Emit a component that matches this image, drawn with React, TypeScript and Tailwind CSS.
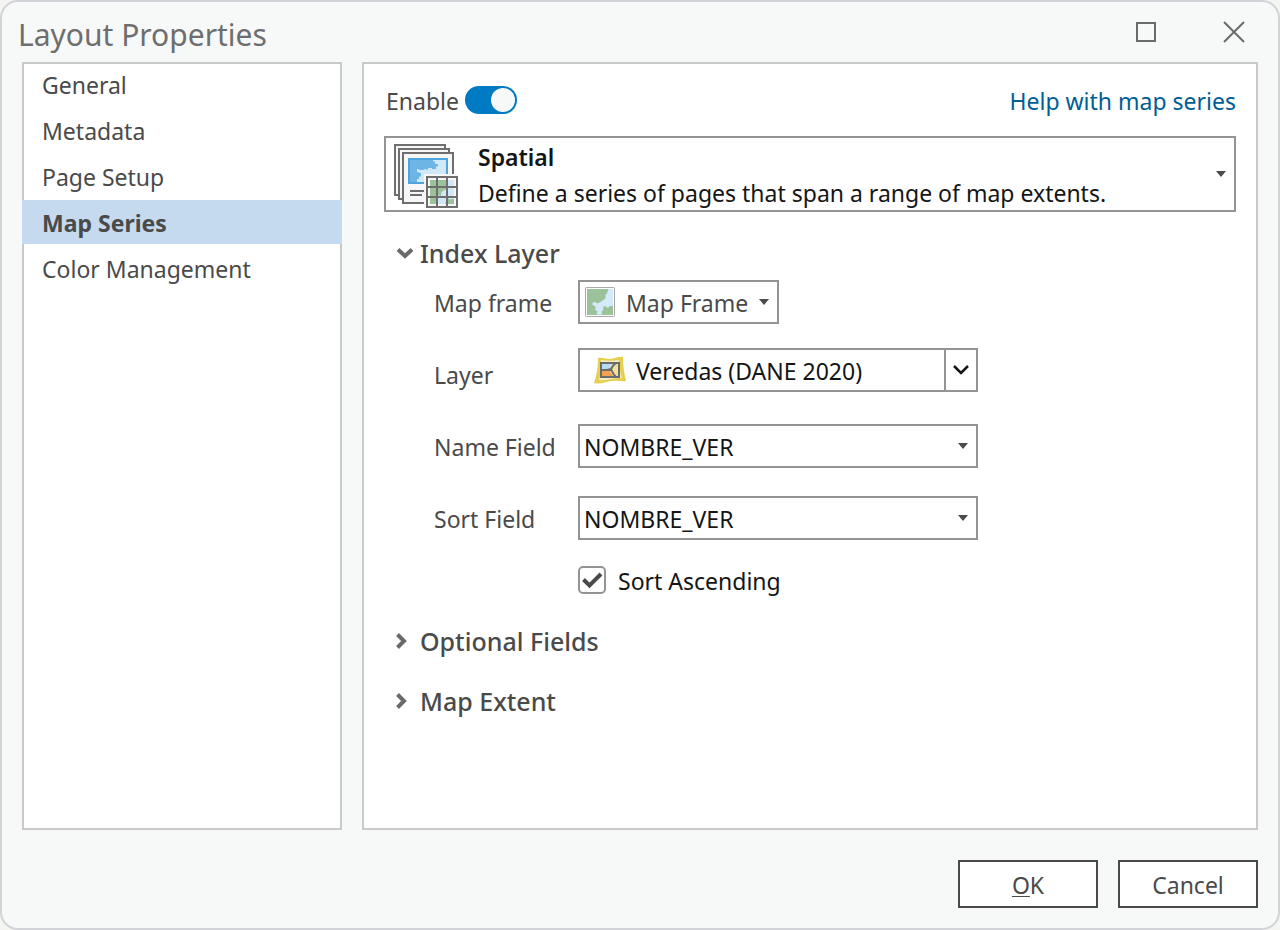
import { useState } from "react";
import type { ReactNode } from "react";

const pages = ["General", "Metadata", "Page Setup", "Map Series", "Color Management"];

function Caret({ className = "" }: { className?: string }) {
  return (
    <svg viewBox="0 0 10 6" className={`pointer-events-none h-[6px] w-[10px] shrink-0 fill-[#4a4a4a] ${className}`} aria-hidden="true">
      <path d="M0 0h10L5 6z" />
    </svg>
  );
}

function SpatialIcon() {
  return (
    <svg viewBox="8 6 64 64" className="mt-1 h-16 w-16 shrink-0" aria-hidden="true">
      <g fill="#f7f7f7" stroke="#6e6e6e" strokeWidth="2">
        <rect x="9" y="7" width="50" height="50" />
        <rect x="13" y="11" width="50" height="50" />
        <rect x="17" y="15" width="50" height="50" />
      </g>
      <rect x="23" y="21" width="38" height="24" fill="#d0e8f8" />
      <path d="M23 21h24v2l2 1v2h3v2l-2 1v2h-4v-1h-4v2l-3-1-2 1h-3l-2-1h-1v3l4 1v3l-2 1v2h-2v4H23z" fill="#6cb5e4" />
      <rect x="23" y="21" width="38" height="24" fill="none" stroke="#4ea4dc" strokeWidth="2" />
      <path d="M24 52h14v2H24zM24 56h12v2H24z" fill="#6e6e6e" />
      <rect x="38" y="36" width="34" height="34" fill="#f7f7f7" />
      <rect x="44" y="42" width="24" height="24" fill="#9cc29c" />
      <path d="M62 42h6v19h-3l-1 1-2-2-2 1v3l-1 2h-7v-3l-2-1v-3l2-2 3 1v-3l2-2 2-1 3-3z" fill="#d0e8f8" />
      <g fill="none" stroke="#6e6e6e" strokeWidth="2">
        <rect x="41" y="39" width="30" height="30" />
        <path d="M51 39v30M61 39v30M41 49h30M41 59h30" />
      </g>
    </svg>
  );
}

function MapIcon({ className = "" }: { className?: string }) {
  return (
    <svg viewBox="0 0 30 30" className={`pointer-events-none h-[30px] w-[30px] ${className}`} aria-hidden="true">
      <rect x="0.5" y="0.5" width="29" height="29" rx="1" fill="#fff" stroke="#a8a8a8" />
      <rect x="2" y="2" width="26" height="26" fill="#9cc29c" />
      <path d="M23.500 2H28v17h-3.500l-1.500 2-3-2-1.500 .5-.5 4-1.500 1 .5 3h-5.500l1-3.500-2.300-.5 .3-4-3-1.500v-2.500l3-.5 1.500 1.500 3-1 2.500-2 3-2V7.500l1.500-1z" fill="#d4e9f9" />
    </svg>
  );
}

function LayerIcon({ className = "" }: { className?: string }) {
  return (
    <svg viewBox="0 0 32 28" className={`pointer-events-none h-7 w-8 ${className}`} aria-hidden="true">
      <path d="M4 2c4-1 8 1 12 1 5 0 8-3 13-2 0 8 1 16 3 24-5 1-9-1-14 0-6 0-11 4-18 2C3 19 4 10 4 2z" fill="#e6cf4e" />
      <path d="M7 4c6 1 12 1 18 0 0 6 1 12 3 18-8 0-15 3-23 2 2-6 2-13 2-20z" fill="#f1ebc6" />
      <rect x="7" y="7" width="18" height="14" fill="#f3e39a" />
      <path d="M8 8h10l-3 5-7 1z" fill="#b8dcf4" />
      <path d="M8 14h7l4 6H8z" fill="#f3a253" />
      <path d="M7 7h18v14H7zM7 14h6l4-1c1-2 2-4 5-6M17 13c1 3 3 6 5 8" fill="none" stroke="#6b6b6b" strokeWidth="2" />
    </svg>
  );
}

function SelectBox({ id, options, className, icon, caret }: { id: string; options: string[]; className: string; icon?: ReactNode; caret?: ReactNode }) {
  return (
    <div className="grid items-center">
      <select id={id} className={`h-11 appearance-none border-2 border-[#949494] bg-white pt-[2px] [grid-area:1/1] ${className}`}>
        {options.map((o) => (
          <option key={o}>{o}</option>
        ))}
      </select>
      {icon}
      {caret ?? <Caret className="mr-[10px] justify-self-end [grid-area:1/1]" />}
    </div>
  );
}

function Row({ id, label, children, className = "items-center" }: { id: string; label: string; children: ReactNode; className?: string }) {
  return (
    <div className={`flex pl-[50px] ${className}`}>
      <label htmlFor={id} className="w-36 shrink-0 self-center pt-[2px]">{label}</label>
      {children}
    </div>
  );
}

function SectionHeader({ title, open, onClick, className = "" }: { title: string; open: boolean; onClick: () => void; className?: string }) {
  return (
    <button type="button" aria-expanded={open} onClick={onClick} className={`flex h-9 items-center pl-3 text-[25px] font-medium ${className}`}>
      <span className="flex w-6 items-center">
        {open ? (
          <svg viewBox="0 0 18 12" className="h-3 w-[18px]" fill="none" stroke="#6a6a6a" strokeWidth="4" aria-hidden="true">
            <path d="M2 2.500l7 6.500 7-6.500" />
          </svg>
        ) : (
          <svg viewBox="0 0 12 18" className="h-[18px] w-3" fill="none" stroke="#6a6a6a" strokeWidth="4" aria-hidden="true">
            <path d="M1.500 2.500L8 9l-6.500 6.500" />
          </svg>
        )}
      </span>
      {title}
    </button>
  );
}

export default function App() {
  const [page, setPage] = useState("Map Series");
  const [open, setOpen] = useState({ index: true, optional: false, extent: false });

  return (
    <div className="min-h-screen bg-[#f4f4f0] font-['Noto_Sans','Open_Sans',sans-serif] text-[23px] leading-9 text-[#4a4a4a]">
      <div className="flex min-h-screen flex-col rounded-[18px] border-2 border-[#d1d3d8] bg-[#f7f9f8] px-5">
        <header className="flex h-[60px] items-center justify-between">
          <h1 className="-ml-1 pt-1.5 text-[30px] text-[#6e6e6e]">Layout Properties</h1>
          <div className="flex items-center gap-[67px] pr-[13px]">
            <button type="button" aria-label="Maximize">
              <svg viewBox="0 0 20 20" className="block h-5 w-5" fill="none" stroke="#6a6a6a" strokeWidth="2">
                <rect x="1" y="1" width="18" height="18" />
              </svg>
            </button>
            <button type="button" aria-label="Close">
              <svg viewBox="0 0 22 22" className="block h-[22px] w-[22px]" fill="none" stroke="#6a6a6a" strokeWidth="2">
                <path d="M1 1l20 20M21 1L1 21" />
              </svg>
            </button>
          </div>
        </header>

        <div className="flex flex-1 gap-5">
          <nav className="w-80 shrink-0 border-2 border-[#c9c9c9] bg-white">
            <ul className="-m-[2px] flex flex-col gap-[2px]">
              {pages.map((p) => (
                <li key={p}>
                  <button
                    type="button"
                    onClick={() => setPage(p)}
                    className={`h-11 w-full px-5 pt-[2px] text-left ${p === page ? "bg-[#c5daee] font-bold" : ""}`}
                  >
                    {p}
                  </button>
                </li>
              ))}
            </ul>
          </nav>

          <main className="flex-1 border-2 border-[#c9c9c9] bg-white p-5">
            <div className="flex h-8 items-center justify-between">
              <label className="flex items-center gap-[6px] pl-[2px]">
                <span className="pt-[2px]">Enable</span>
                <input
                  type="checkbox"
                  role="switch"
                  defaultChecked
                  className="h-7 w-[52px] appearance-none rounded-full bg-[#9a9a9a] p-[2px] before:block before:h-6 before:w-6 before:rounded-full before:bg-[#f7f9f8] checked:bg-[#007ac2] checked:before:ml-6"
                />
              </label>
              <a href="#help" className="pt-[2px] text-[#005e95]">Help with map series</a>
            </div>

            <button type="button" aria-haspopup="listbox" className="mt-5 flex h-[76px] w-full items-center border-2 border-[#949494] bg-white px-2 text-left text-[#151515]">
              <SpatialIcon />
              <span className="flex-1 pt-[2px] pl-5">
                <span className="block font-semibold">Spatial</span>
                <span className="block">Define a series of pages that span a range of map extents.</span>
              </span>
              <Caret />
            </button>

            <section>
              <SectionHeader title="Index Layer" open={open.index} onClick={() => setOpen({ ...open, index: !open.index })} className="mt-[23px]" />
              {open.index && (
                <div className="pt-[9px]">
                  <Row id="frame" label="Map frame">
                    <SelectBox
                      id="frame"
                      options={["Map Frame"]}
                      className="w-[201px] pl-[46px]"
                      icon={<MapIcon className="ml-[7px] [grid-area:1/1]" />}
                    />
                  </Row>
                  <Row id="layer" label="Layer" className="mt-6 h-[52px] items-start">
                    <SelectBox
                      id="layer"
                      options={["Veredas (DANE 2020)"]}
                      className="w-[400px] pl-14 text-[#151515]"
                      icon={<LayerIcon className="ml-4 [grid-area:1/1]" />}
                      caret={
                        <span className="pointer-events-none flex h-11 w-[34px] items-center justify-center justify-self-end border-2 border-[#949494] [grid-area:1/1]">
                          <svg viewBox="0 0 16 10" className="h-[10px] w-4" fill="none" stroke="#151515" strokeWidth="2.500" aria-hidden="true">
                            <path d="M1 1l7 7 7-7" />
                          </svg>
                        </span>
                      }
                    />
                  </Row>
                  <Row id="name" label="Name Field" className="mt-6 items-center">
                    <SelectBox id="name" options={["NOMBRE_VER"]} className="w-[400px] pl-1 text-[#151515]" />
                  </Row>
                  <Row id="sort" label="Sort Field" className="mt-7 items-center">
                    <SelectBox id="sort" options={["NOMBRE_VER"]} className="w-[400px] pl-1 text-[#151515]" />
                  </Row>
                  <div className="mt-[26px] flex h-7 items-center pl-[194px]">
                    <span className="grid">
                      <input
                        id="ascending"
                        type="checkbox"
                        defaultChecked
                        className="peer h-7 w-7 appearance-none rounded-[5px] border-2 border-[#949494] bg-white [grid-area:1/1]"
                      />
                      <svg viewBox="0 0 28 28" className="pointer-events-none invisible h-7 w-7 [grid-area:1/1] peer-checked:visible" fill="none" stroke="#4a4a4a" strokeWidth="4" aria-hidden="true">
                        <path d="M5.500 13.500l6 6L23 8" />
                      </svg>
                    </span>
                    <label htmlFor="ascending" className="pt-[2px] pl-3 text-[#151515]">Sort Ascending</label>
                  </div>
                </div>
              )}
            </section>
            <SectionHeader title="Optional Fields" open={open.optional} onClick={() => setOpen({ ...open, optional: !open.optional })} className="mt-[29px]" />
            <SectionHeader title="Map Extent" open={open.extent} onClick={() => setOpen({ ...open, extent: !open.extent })} className="mt-6" />
          </main>
        </div>

        <footer className="flex justify-end gap-5 pt-[30px] pb-5">
          <button type="button" className="h-12 w-[140px] border-2 border-[#4a4a4a] bg-white pt-[2px]"><u className="decoration-1 underline-offset-2">O</u>K</button>
          <button type="button" className="h-12 w-[140px] border-2 border-[#4a4a4a] bg-white pt-[2px]">Cancel</button>
        </footer>
      </div>
    </div>
  );
}
